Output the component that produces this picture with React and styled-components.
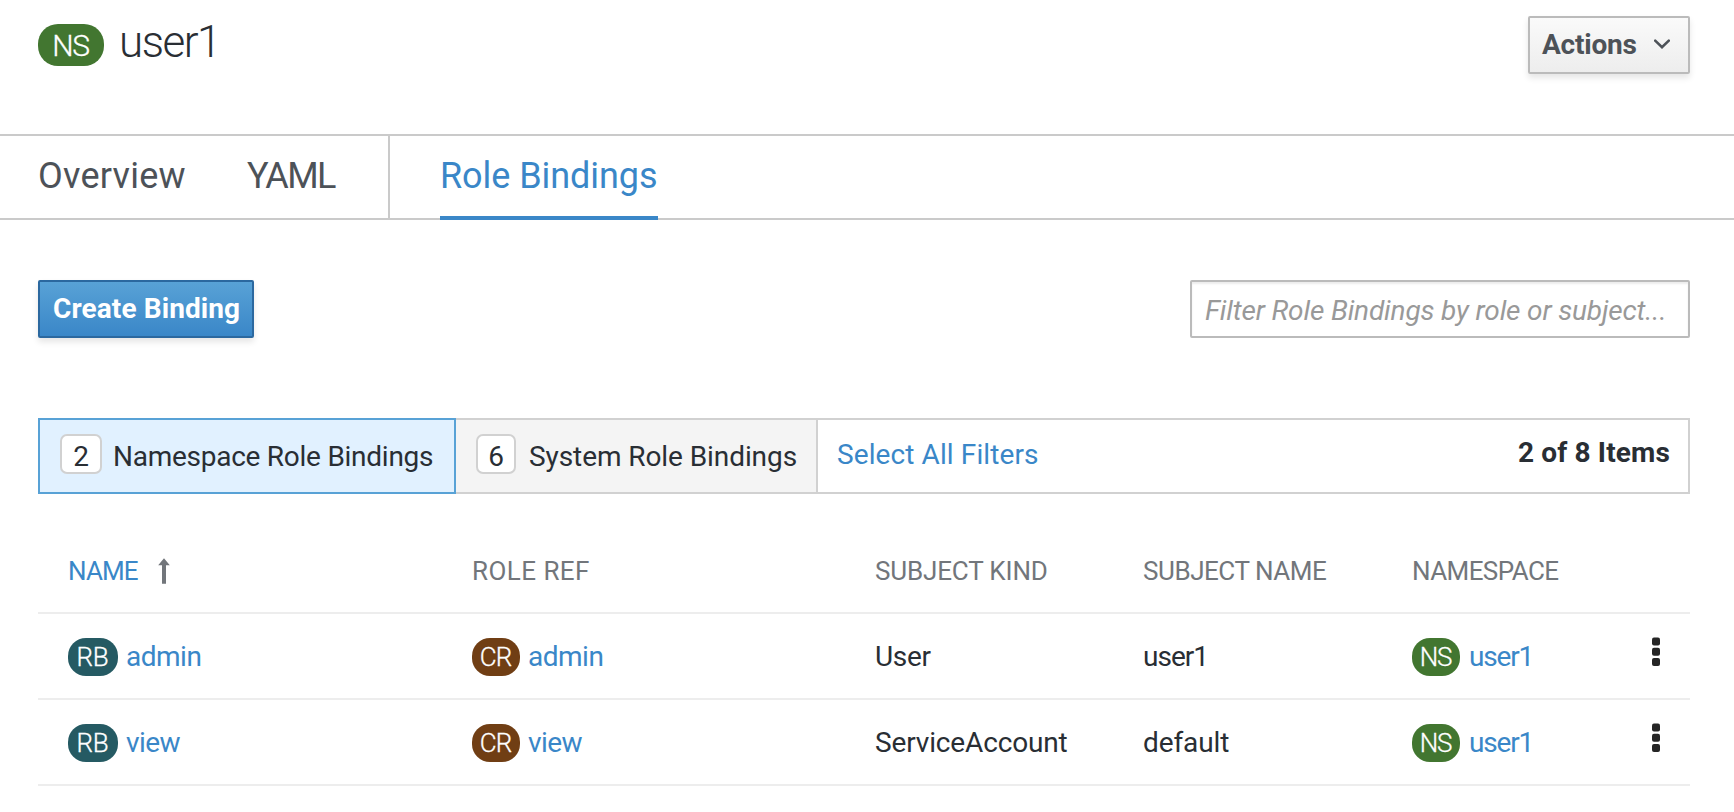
import React from "react";
import styled, { createGlobalStyle } from "styled-components";

const GlobalStyle = createGlobalStyle`
  *, *::before, *::after { box-sizing: border-box; }
  body {
    margin: 0;
    background: #fff;
    color: #292e34;
    font-family: Roboto, "Liberation Sans", sans-serif;
    font-size: 28px;
  }
`;

const Page = styled.main`
  height: 812px;
  overflow: hidden;
`;

const Header = styled.header`
  display: flex;
  justify-content: space-between;
  align-items: flex-start;
  height: 134px;
  padding: 16px 44px 0 38px;
`;

const Heading = styled.div`
  display: flex;
  align-items: flex-start;
  gap: 15px;
  padding-top: 8px;
`;

const Title = styled.h1`
  margin: -2px 0 0;
  font-size: 44px;
  line-height: 40px;
  font-weight: 300;
  letter-spacing: -1.5px;
`;

const KINDS = {
  NS: { color: "#427630", width: 48, gap: 9, tracking: -1.3 },
  RB: { color: "#255a63", width: 50, gap: 8, tracking: -0.3 },
  CR: { color: "#703e14", width: 48, gap: 8, tracking: -1 },
};

const KindBadge = styled.span`
  flex: none;
  width: ${(p) => (p.$large ? 66 : KINDS[p.$kind].width)}px;
  height: ${(p) => (p.$large ? 42 : 38)}px;
  padding-top: ${(p) => (p.$large ? 2 : 0)}px;
  padding-right: 1px;
  border-radius: ${(p) => (p.$large ? 20 : 18)}px;
  background: ${(p) => KINDS[p.$kind].color};
  color: #fff;
  font-size: ${(p) => (p.$large ? 30 : 26)}px;
  line-height: ${(p) => (p.$large ? 40 : 38)}px;
  font-weight: 300;
  -webkit-text-stroke: 0.3px #fff;
  letter-spacing: ${(p) => KINDS[p.$kind].tracking}px;
  text-align: center;
`;

const Button = styled.button`
  display: flex;
  align-items: center;
  height: 58px;
  border: 2px solid ${(p) => (p.$primary ? "#2b689f" : "#bbb")};
  border-radius: 2px;
  padding: ${(p) => (p.$primary ? "0 12px 2px 13px" : "0 18px 2px 12px")};
  background: ${(p) =>
    p.$primary
      ? "linear-gradient(#58a2d6, #3a87c8)"
      : "linear-gradient(#fafafa, #ededed)"};
  box-shadow: 0 4px 6px rgba(3, 3, 3, 0.1);
  color: ${(p) => (p.$primary ? "#fff" : "#4d5258")};
  font: 700 28px Roboto, "Liberation Sans", sans-serif;
  letter-spacing: ${(p) => (p.$primary ? 0.1 : -0.2)}px;
  white-space: nowrap;
`;

const ActionsButton = styled(Button)`
  width: 162px;
  justify-content: space-between;
`;

const CreateButton = styled(Button)`
  width: 216px;
`;

const Tabs = styled.nav`
  display: flex;
  height: 86px;
  padding-left: 38px;
  border-top: 2px solid #cacaca;
  border-bottom: 2px solid #cacaca;
`;

const TabGroup = styled.div`
  display: flex;
  gap: 61px;
  width: 352px;
  margin-right: 50px;
  border-right: 2px solid #cacaca;
`;

const Tab = styled.a`
  height: 84px;
  margin-bottom: -2px;
  border-bottom: 4px solid ${(p) => (p.$active ? "#3a87c8" : "transparent")};
  color: ${(p) => (p.$active ? "#3a87c8" : "#4d5258")};
  font-size: 36px;
  line-height: 80px;
  letter-spacing: ${(p) => p.$tracking}px;
  white-space: nowrap;
`;

const Toolbar = styled.div`
  display: flex;
  justify-content: space-between;
  padding: 60px 44px 0 38px;
`;

const FilterInput = styled.input`
  width: 500px;
  height: 58px;
  border: 2px solid #bbb;
  border-radius: 2px;
  padding: 3px 12px 0 13px;
  box-shadow: inset 0 2px 2px rgba(3, 3, 3, 0.075);
  background: #fff;
  font: 400 28px Roboto, "Liberation Sans", sans-serif;
  letter-spacing: -0.15px;
  outline: none;
  &::placeholder {
    color: #999;
    font-style: italic;
    opacity: 1;
  }
`;

const FilterBar = styled.div`
  display: flex;
  height: 76px;
  margin: 80px 44px 0 38px;
  border: 2px solid #d1d1d1;
`;

const FilterToggle = styled.div`
  display: flex;
  align-items: flex-start;
  gap: ${(p) => (p.$active ? 11 : 13)}px;
  width: ${(p) => (p.$active ? 418 : 362)}px;
  margin: ${(p) => (p.$active ? "-2px 0 -2px -2px" : "0")};
  padding: 14px 0 0 20px;
  border: 0 solid #d1d1d1;
  border-right-width: 2px;
  background: #f4f4f4;
  letter-spacing: ${(p) => (p.$active ? -0.26 : -0.08)}px;
  line-height: 46px;
  white-space: nowrap;
  ${(p) => p.$active && "border: 2px solid #58a2d6; background: #e1f1ff;"}
`;

const Count = styled.span`
  flex: none;
  width: ${(p) => p.$width}px;
  height: 40px;
  padding-top: 2px;
  border: 2px solid #d1d1d1;
  border-radius: 7px;
  background: #fff;
  line-height: 38px;
  text-align: center;
`;

const SelectAll = styled.a`
  margin-left: 19px;
  color: #3a87c8;
  line-height: 69px;
  letter-spacing: 0.1px;
`;

const Total = styled.span`
  margin: 0 18px 0 auto;
  font-weight: 700;
  line-height: 65px;
  letter-spacing: 0.15px;
`;

const Table = styled.div`
  margin: 34px 44px 0 38px;
`;

const Row = styled.div`
  display: grid;
  grid-template-columns: 404px 403px 268px 269px 1fr auto;
  align-items: center;
  height: 86px;
  padding: ${(p) => (p.$head ? "1px" : "2px")} 30px 0 30px;
  border-bottom: 2px solid #ededed;
`;

const HeadCell = styled.div`
  display: flex;
  align-items: center;
  gap: 20px;
  color: ${(p) => (p.$sorted ? "#3a87c8" : "#72767b")};
  font-size: 26px;
  letter-spacing: ${(p) => p.$tracking}px;
`;

const Cell = styled.div`
  display: flex;
  align-items: center;
  gap: ${(p) => p.$gap || 0}px;
  letter-spacing: ${(p) => p.$tracking}px;
`;

const CellText = styled.span`
  padding-bottom: 2px;
  color: ${(p) => (p.$link ? "#3a87c8" : "inherit")};
`;

const KebabIcon = styled.svg`
  display: block;
  margin-top: -10px;
  fill: #252525;
`;

function Kebab() {
  return (
    <KebabIcon width="8" height="30" viewBox="0 0 8 30">
      <rect y="0.4" width="8" height="8" rx="2" />
      <rect y="10.8" width="8" height="8" rx="2" />
      <rect y="21.1" width="8" height="8" rx="2" />
    </KebabIcon>
  );
}

function ResourceCell({ kind, name, tracking }) {
  return (
    <Cell $gap={KINDS[kind].gap} $tracking={tracking}>
      <KindBadge $kind={kind}>{kind}</KindBadge>
      <CellText $link>{name}</CellText>
    </Cell>
  );
}

const COLUMNS = [
  { label: "NAME", tracking: -0.9, sorted: true },
  { label: "ROLE REF", tracking: 0.45 },
  { label: "SUBJECT KIND", tracking: -0.16 },
  { label: "SUBJECT NAME", tracking: -0.45 },
  { label: "NAMESPACE", tracking: -0.6 },
];

const BINDINGS = [
  { name: "admin", nameTracking: -0.5, kind: "User", kindTracking: -0.3, subject: "user1", subjectTracking: -1 },
  { name: "view", nameTracking: -0.6, kind: "ServiceAccount", kindTracking: -0.15, subject: "default", subjectTracking: -0.1 },
];

export default function App() {
  return (
    <Page>
      <GlobalStyle />
      <Header>
        <Heading>
          <KindBadge $kind="NS" $large>NS</KindBadge>
          <Title>user1</Title>
        </Heading>
        <ActionsButton>
          Actions
          <svg width="16" height="10" viewBox="0 0 16 10" fill="none" stroke="#4d5258" strokeWidth="2.6">
            <path d="M1.2 1.6 8 8.2 14.8 1.6" strokeLinecap="round" />
          </svg>
        </ActionsButton>
      </Header>

      <Tabs>
        <TabGroup>
          <Tab $tracking={0.25}>Overview</Tab>
          <Tab $tracking={-1.6}>YAML</Tab>
        </TabGroup>
        <Tab $active $tracking={-0.06}>Role Bindings</Tab>
      </Tabs>

      <Toolbar>
        <CreateButton $primary>Create Binding</CreateButton>
        <FilterInput placeholder="Filter Role Bindings by role or subject..." />
      </Toolbar>

      <FilterBar>
        <FilterToggle $active>
          <Count $width={42}>2</Count>
          Namespace Role Bindings
        </FilterToggle>
        <FilterToggle>
          <Count $width={40}>6</Count>
          System Role Bindings
        </FilterToggle>
        <SelectAll>Select All Filters</SelectAll>
        <Total>2 of 8 Items</Total>
      </FilterBar>

      <Table>
        <Row $head>
          {COLUMNS.map((c) => (
            <HeadCell key={c.label} $sorted={c.sorted} $tracking={c.tracking}>
              {c.label}
              {c.sorted && (
                <svg width="12" height="26" viewBox="0 0 12 26" fill="#72767b">
                  <path d="M6 0.2 11.8 7.2H8V25.8H4V7.2H0.2Z" />
                </svg>
              )}
            </HeadCell>
          ))}
        </Row>
        {BINDINGS.map((b) => (
          <Row key={b.name}>
            <ResourceCell kind="RB" name={b.name} tracking={b.nameTracking} />
            <ResourceCell kind="CR" name={b.name} tracking={b.nameTracking} />
            <Cell $tracking={b.kindTracking}>
              <CellText>{b.kind}</CellText>
            </Cell>
            <Cell $tracking={b.subjectTracking}>
              <CellText>{b.subject}</CellText>
            </Cell>
            <ResourceCell kind="NS" name="user1" tracking={-1.2} />
            <Kebab />
          </Row>
        ))}
      </Table>
    </Page>
  );
}
